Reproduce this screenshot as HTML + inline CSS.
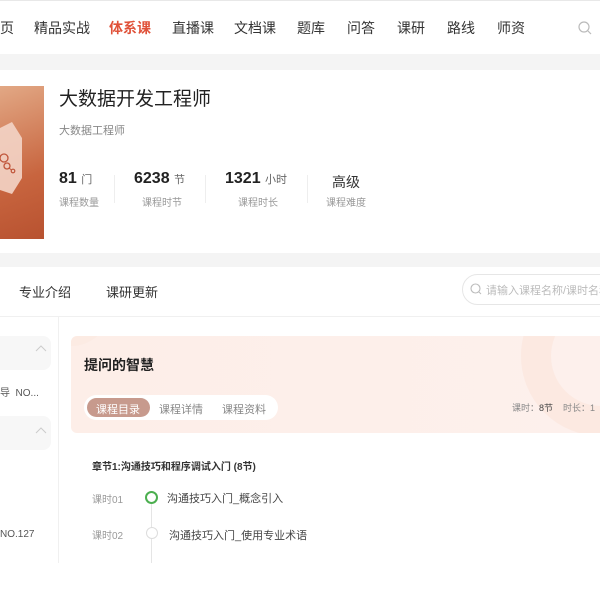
<!DOCTYPE html>
<html><head><meta charset="utf-8"><style>
*{margin:0;padding:0;box-sizing:border-box}
body{width:600px;height:600px;overflow:hidden;background:#fff;font-family:"Liberation Sans","Noto Sans CJK SC",sans-serif;position:relative;color:#333}
.a{position:absolute;white-space:nowrap}
.nav{font-size:14px;color:#333;top:18px}
</style></head><body>
<div class="a" style="left:0;top:0;width:600px;height:1px;background:#e8e8e8"></div>
<div class="a" style="left:0;top:54px;width:600px;height:16px;background:#f4f4f4"></div>
<div class="a" style="left:0;top:253px;width:600px;height:14px;background:#f4f4f4"></div>
<div class="a nav" style="left:0">页</div>
<div class="a nav" style="left:34px">精品实战</div>
<div class="a nav" style="left:109px;color:#e0523a;font-weight:bold">体系课</div>
<div class="a nav" style="left:172px">直播课</div>
<div class="a nav" style="left:234px">文档课</div>
<div class="a nav" style="left:297px">题库</div>
<div class="a nav" style="left:347px">问答</div>
<div class="a nav" style="left:397px">课研</div>
<div class="a nav" style="left:447px">路线</div>
<div class="a nav" style="left:497px">师资</div>
<svg class="a" style="left:578px;top:21px" width="14" height="14"><circle cx="6" cy="6" r="5" fill="none" stroke="#bbb" stroke-width="1.2"/><line x1="10" y1="10" x2="13" y2="13" stroke="#bbb" stroke-width="1.2"/></svg>
<div class="a" style="left:0;top:86px;width:44px;height:153px;background:linear-gradient(160deg,#e2a885,#c8653f 60%,#b85230)"></div>
<svg class="a" style="left:0;top:120px" width="44" height="80"><polygon points="0,8 12,2 22,18 22,58 12,74 0,70" fill="#f3d4c6" opacity="0.9"/><circle cx="4" cy="38" r="4" fill="none" stroke="#c0553a" stroke-width="1.3"/><circle cx="7" cy="46" r="3" fill="none" stroke="#c0553a" stroke-width="1.3"/><circle cx="13" cy="51" r="1.8" fill="none" stroke="#c0553a" stroke-width="1.2"/><line x1="9" y1="48" x2="11.5" y2="50" stroke="#c0553a"/></svg>
<div class="a" style="left:59px;top:84px;font-size:19px;color:#222">大数据开发工程师</div>
<div class="a" style="left:59px;top:122px;font-size:11px;color:#888">大数据工程师</div>
<div class="a" style="left:59px;top:170px;font-size:16px;font-weight:bold;color:#222">81 <span style="font-size:11px;font-weight:normal;color:#666">门</span></div>
<div class="a" style="left:59px;top:194px;font-size:10px;color:#999">课程数量</div>
<div class="a" style="left:114px;top:175px;width:1px;height:28px;background:#eee"></div>
<div class="a" style="left:134px;top:170px;font-size:16px;font-weight:bold;color:#222">6238 <span style="font-size:11px;font-weight:normal;color:#666">节</span></div>
<div class="a" style="left:142px;top:194px;font-size:10px;color:#999">课程时节</div>
<div class="a" style="left:205px;top:175px;width:1px;height:28px;background:#eee"></div>
<div class="a" style="left:225px;top:170px;font-size:16px;font-weight:bold;color:#222">1321 <span style="font-size:11px;font-weight:normal;color:#666">小时</span></div>
<div class="a" style="left:238px;top:194px;font-size:10px;color:#999">课程时长</div>
<div class="a" style="left:307px;top:175px;width:1px;height:28px;background:#eee"></div>
<div class="a" style="left:332px;top:172px;font-size:14px;color:#333">高级</div>
<div class="a" style="left:326px;top:194px;font-size:10px;color:#999">课程难度</div>
<div class="a" style="left:19px;top:282px;font-size:13px;color:#333">专业介绍</div>
<div class="a" style="left:106px;top:282px;font-size:13px;color:#333">课研更新</div>
<div class="a" style="left:462px;top:274px;width:160px;height:31px;border:1px solid #e6e6e6;border-radius:16px"></div>
<svg class="a" style="left:470px;top:283px" width="12" height="12"><circle cx="5.5" cy="5.5" r="4.5" fill="none" stroke="#bbb" stroke-width="1.1"/><line x1="9" y1="9" x2="11" y2="11" stroke="#bbb"/></svg>
<div class="a" style="left:486px;top:282px;font-size:11px;color:#bbb">请输入课程名称/课时名称</div>
<div class="a" style="left:0;top:316px;width:600px;height:1px;background:#f0f0f0"></div>
<div class="a" style="left:58px;top:317px;width:1px;height:246px;background:#f0f0f0"></div>
<div class="a" style="left:0;top:336px;width:51px;height:34px;background:#f7f7f7;border-radius:0 8px 8px 0"></div>
<div class="a" style="left:0;top:416px;width:51px;height:34px;background:#f7f7f7;border-radius:0 8px 8px 0"></div>
<svg class="a" style="left:35px;top:345px" width="12" height="8"><polyline points="1,6 6,1 11,6" fill="none" stroke="#ccc"/></svg>
<svg class="a" style="left:35px;top:427px" width="12" height="8"><polyline points="1,6 6,1 11,6" fill="none" stroke="#ccc"/></svg>
<div class="a" style="left:0;top:384px;font-size:10px;color:#555">导&nbsp; NO...</div>
<div class="a" style="left:0;top:529px;font-size:10px;color:#555">NO.127</div>
<div class="a" style="left:71px;top:336px;width:540px;height:97px;background:linear-gradient(90deg,#fdeee8,#fdf0ec);border-radius:6px;overflow:hidden">
<div style="position:absolute;left:450px;top:-60px;width:160px;height:160px;border:30px solid #fbe4da;border-radius:50%;opacity:.6"></div>
<div style="position:absolute;left:-40px;top:-70px;width:80px;height:80px;border:20px solid #fbe6dd;border-radius:50%;opacity:.4"></div>
</div>
<div class="a" style="left:84px;top:355px;font-size:14px;font-weight:bold;color:#222">提问的智慧</div>
<div class="a" style="left:84px;top:395px;width:194px;height:25px;background:#fff;border-radius:13px"></div>
<div class="a" style="left:87px;top:398px;width:63px;height:19px;background:#c79a8d;border-radius:10px"></div>
<div class="a" style="left:96px;top:401px;font-size:11px;color:#fff">课程目录</div>
<div class="a" style="left:159px;top:401px;font-size:11px;color:#888">课程详情</div>
<div class="a" style="left:222px;top:401px;font-size:11px;color:#888">课程资料</div>
<div class="a" style="left:512px;top:401px;font-size:9px;color:#888">课时：<b style="color:#444;font-weight:normal">8节</b>&nbsp;&nbsp;&nbsp; 时长：1</div>
<div class="a" style="left:92px;top:458px;font-size:10px;color:#333;font-weight:bold">章节1:沟通技巧和程序调试入门 (8节)</div>
<div class="a" style="left:92px;top:491px;font-size:10px;color:#999">课时01</div>
<div class="a" style="left:92px;top:527px;font-size:10px;color:#999">课时02</div>
<div class="a" style="left:151px;top:503px;width:1px;height:60px;background:#e5e5e5"></div>
<div class="a" style="left:145px;top:491px;width:13px;height:13px;border:2px solid #4caf50;border-radius:50%;background:#fff"></div>
<div class="a" style="left:146px;top:527px;width:12px;height:12px;border:1px solid #ddd;border-radius:50%;background:#fff"></div>
<div class="a" style="left:167px;top:490px;font-size:11px;color:#444">沟通技巧入门_概念引入</div>
<div class="a" style="left:169px;top:527px;font-size:11px;color:#444">沟通技巧入门_使用专业术语</div>
</body></html>
